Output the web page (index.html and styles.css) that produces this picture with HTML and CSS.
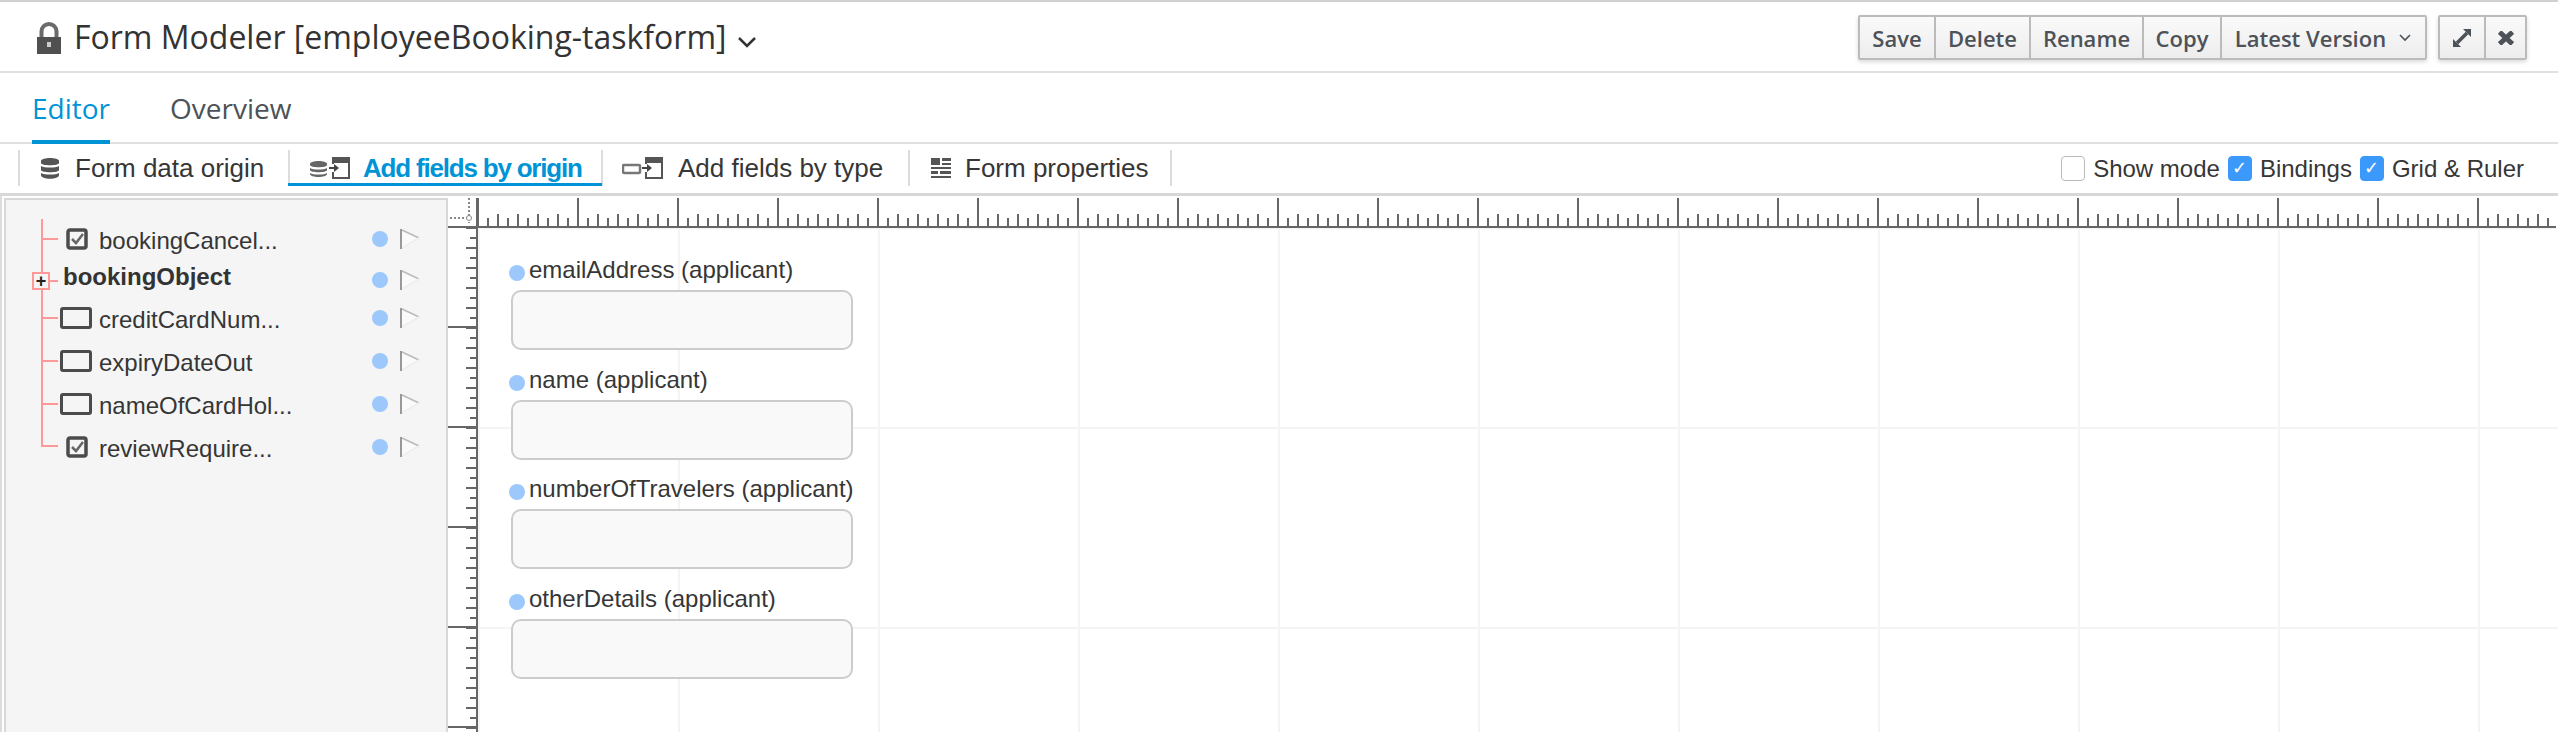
FILE: index.html
```html
<!DOCTYPE html>
<html>

<head>
    <title>Form Modeler</title>
    <link rel="stylesheet" href="styles.css">
</head>

<body>
    <header class="title-bar">
        <svg class="lock" width="26" height="33" viewBox="0 0 26 33">
            <path d="M5.500 17V9.500a7.500 7.500 0 0 1 15 0V17" fill="none" stroke="#6b6b6b" stroke-width="4"/>
            <rect x="1" y="15" width="24" height="17" fill="#505050"/>
            <rect x="11" y="20" width="4" height="5" fill="#ccc"/>
        </svg>
        <h1 class="title">Form Modeler [employeeBooking-taskform]</h1>
        <svg class="title-caret" width="20" height="12" viewBox="0 0 20 12">
            <path d="M2 2l8 8 8-8" fill="none" stroke="#333" stroke-width="2.500"/>
        </svg>
        <div class="title-actions">
            <div class="btn-group">
                <button class="btn btn-save">Save</button>
                <button class="btn btn-delete">Delete</button>
                <button class="btn btn-rename">Rename</button>
                <button class="btn btn-copy">Copy</button>
                <button class="btn btn-version">Latest Version
                    <svg width="14" height="9" viewBox="0 0 14 9">
                        <path d="M2 2l5 5 5-5" fill="none" stroke="#4d5258" stroke-width="1.600"/>
                    </svg>
                </button>
            </div>
            <div class="btn-group">
                <button class="btn btn-expand">
                    <svg width="20" height="20" viewBox="0 0 20 20">
                        <path d="M5 15L15 5" stroke="#4d5258" stroke-width="3.500"/>
                        <path d="M11 1h8v8zM9 19H1v-8z" fill="#4d5258"/>
                    </svg>
                </button>
                <button class="btn btn-close">
                    <svg width="16" height="14" viewBox="0 0 16 14">
                        <path d="M1.500 1l13 12M14.500 1l-13 12" fill="none" stroke="#4d5258" stroke-width="5"/>
                    </svg>
                </button>
            </div>
        </div>
    </header>

    <nav class="tabs">
        <a class="tab tab-active">Editor</a>
        <a class="tab">Overview</a>
    </nav>

    <div class="toolbar">
        <div class="tool tool-origin">
            <svg width="20" height="21" viewBox="0 0 20 21">
                <g fill="#555">
                    <path d="M1 3c0-4 18-4 18 0v2c0 3-18 3-18 0z"/>
                    <path d="M1 8c3 2 15 2 18 0v4c0 3-18 3-18 0z"/>
                    <path d="M1 15c3 2 15 2 18 0v2c0 5-18 5-18 0z"/>
                </g>
            </svg>
            <span>Form data origin</span>
        </div>
        <div class="tool tool-active">
            <svg width="40" height="22" viewBox="0 0 40 22">
                <g fill="#666">
                    <path d="M0 7c0-4 17-4 17 0v1c0 3-17 3-17 0z"/>
                    <path d="M0 11c3 2 14 2 17 0v2c0 3-17 3-17 0z"/>
                    <path d="M0 16c3 2 14 2 17 0v1c0 4-17 4-17 0z"/>
                </g>
                <path d="M23 7V1h16v20H23v-6" fill="none" stroke="#555" stroke-width="2"/>
                <path d="M23 1h16v5H23z" fill="#555"/>
                <path d="M19 10h5V7l5 4-5 4v-3h-5z" fill="#444"/>
            </svg>
            <span>Add fields by origin</span>
        </div>
        <div class="tool tool-type">
            <svg width="41" height="22" viewBox="0 0 41 22">
                <rect x="1" y="8" width="17" height="8" rx="1" fill="none" stroke="#777" stroke-width="2.500"/>
                <path d="M24 7V1h16v20H24v-6" fill="none" stroke="#555" stroke-width="2"/>
                <path d="M24 1h16v5H24z" fill="#555"/>
                <path d="M20 10h5V7l5 4-5 4v-3h-5z" fill="#444"/>
            </svg>
            <span>Add fields by type</span>
        </div>
        <div class="tool tool-props">
            <svg width="20" height="20" viewBox="0 0 20 20">
                <path d="M0 0h9v7H0zM11 0h9v3h-9zM11 5h9v2h-9zM0 9h20v2H0zM0 13h7v3H0zM9 13h11v3H9zM0 18h20v2H0z" fill="#555"/>
            </svg>
            <span>Form properties</span>
        </div>
        <div class="view-options">
            <label class="check"><span class="box"></span>Show mode</label>
            <label class="check"><span class="box box-on">&#10003;</span>Bindings</label>
            <label class="check"><span class="box box-on">&#10003;</span>Grid &amp; Ruler</label>
        </div>
    </div>

    <main class="workspace">
        <aside class="tree">
            <div class="node node-first">
                <span class="branch"></span>
                <svg class="icon-check" width="22" height="22" viewBox="0 0 22 22"><rect x="2" y="2" width="18" height="18" rx="2" fill="none" stroke="#4b4b4b" stroke-width="3.500"/><path d="M6 11l4 4 7-9" fill="none" stroke="#666" stroke-width="2.500"/></svg>
                <span class="node-name">bookingCancel...</span>
                <span class="dot"></span>
                <svg class="flag" width="20" height="20" viewBox="0 0 20 20"><path d="M2 1l17 8L2 19" fill="#fafafa"/><path d="M2 1l17 8" fill="none" stroke="#bbb" stroke-width="1.500"/><path d="M19 9L2 19" fill="none" stroke="#eee" stroke-width="1.500"/><path d="M1 20V0" stroke="#999" stroke-width="2"/></svg>
            </div>
            <div class="node node-parent">
                <span class="branch"></span>
                <span class="plus">+</span>
                <span class="node-name node-bold">bookingObject</span>
                <span class="dot"></span>
                <svg class="flag" width="20" height="20" viewBox="0 0 20 20"><path d="M2 1l17 8L2 19" fill="#fafafa"/><path d="M2 1l17 8" fill="none" stroke="#bbb" stroke-width="1.500"/><path d="M19 9L2 19" fill="none" stroke="#eee" stroke-width="1.500"/><path d="M1 20V0" stroke="#999" stroke-width="2"/></svg>
            </div>
            <div class="node">
                <span class="branch"></span>
                <span class="icon-input"></span>
                <span class="node-name">creditCardNum...</span>
                <span class="dot"></span>
                <svg class="flag" width="20" height="20" viewBox="0 0 20 20"><path d="M2 1l17 8L2 19" fill="#fafafa"/><path d="M2 1l17 8" fill="none" stroke="#bbb" stroke-width="1.500"/><path d="M19 9L2 19" fill="none" stroke="#eee" stroke-width="1.500"/><path d="M1 20V0" stroke="#999" stroke-width="2"/></svg>
            </div>
            <div class="node">
                <span class="branch"></span>
                <span class="icon-input"></span>
                <span class="node-name">expiryDateOut</span>
                <span class="dot"></span>
                <svg class="flag" width="20" height="20" viewBox="0 0 20 20"><path d="M2 1l17 8L2 19" fill="#fafafa"/><path d="M2 1l17 8" fill="none" stroke="#bbb" stroke-width="1.500"/><path d="M19 9L2 19" fill="none" stroke="#eee" stroke-width="1.500"/><path d="M1 20V0" stroke="#999" stroke-width="2"/></svg>
            </div>
            <div class="node">
                <span class="branch"></span>
                <span class="icon-input"></span>
                <span class="node-name">nameOfCardHol...</span>
                <span class="dot"></span>
                <svg class="flag" width="20" height="20" viewBox="0 0 20 20"><path d="M2 1l17 8L2 19" fill="#fafafa"/><path d="M2 1l17 8" fill="none" stroke="#bbb" stroke-width="1.500"/><path d="M19 9L2 19" fill="none" stroke="#eee" stroke-width="1.500"/><path d="M1 20V0" stroke="#999" stroke-width="2"/></svg>
            </div>
            <div class="node node-last">
                <span class="branch"></span>
                <svg class="icon-check" width="22" height="22" viewBox="0 0 22 22"><rect x="2" y="2" width="18" height="18" rx="2" fill="none" stroke="#4b4b4b" stroke-width="3.500"/><path d="M6 11l4 4 7-9" fill="none" stroke="#666" stroke-width="2.500"/></svg>
                <span class="node-name">reviewRequire...</span>
                <span class="dot"></span>
                <svg class="flag" width="20" height="20" viewBox="0 0 20 20"><path d="M2 1l17 8L2 19" fill="#fafafa"/><path d="M2 1l17 8" fill="none" stroke="#bbb" stroke-width="1.500"/><path d="M19 9L2 19" fill="none" stroke="#eee" stroke-width="1.500"/><path d="M1 20V0" stroke="#999" stroke-width="2"/></svg>
            </div>
        </aside>

        <section class="canvas">
            <div class="ruler-corner">
                <svg width="30" height="30" viewBox="0 0 30 30">
                    <path d="M21 0v25M2 20h19" fill="none" stroke="#888" stroke-width="2" stroke-dasharray="2 2"/>
                    <circle cx="21" cy="20" r="2.500" fill="#fff" stroke="#888"/>
                </svg>
            </div>
            <div class="ruler-x"></div>
            <div class="ruler-y"></div>
            <div class="stage">
                <div class="field">
                    <div class="field-label"><span class="dot"></span>emailAddress (applicant)</div>
                    <div class="field-input"></div>
                </div>
                <div class="field">
                    <div class="field-label"><span class="dot"></span>name (applicant)</div>
                    <div class="field-input"></div>
                </div>
                <div class="field">
                    <div class="field-label"><span class="dot"></span>numberOfTravelers (applicant)</div>
                    <div class="field-input"></div>
                </div>
                <div class="field">
                    <div class="field-label"><span class="dot"></span>otherDetails (applicant)</div>
                    <div class="field-input"></div>
                </div>
            </div>
        </section>
    </main>
</body>

</html>
```

FILE: styles.css
```css
html,
body {
    height: 100%;
}

body {
    margin: 0;
    height: 732px;
    overflow: hidden;
    display: flex;
    flex-direction: column;
    background-color: #fff;
    color: #363636;
    font-family: "Open Sans", sans-serif;
    border-top: 2px solid #d1d1d1;
    box-sizing: border-box;
}

/* title bar */
.title-bar {
    height: 69px;
    flex: none;
    display: flex;
    align-items: center;
    padding: 0 31px 0 36px;
    border-bottom: 2px solid #e0e0e0;
}

.lock {
    margin: 4px 12px 0 0;
    flex: none;
}

.title {
    margin: 0;
    font-size: 32px;
    font-weight: 400;
    color: #333;
}

.title-caret {
    margin: 11px 0 0 10px;
}

.title-actions {
    margin-left: auto;
    display: flex;
    gap: 11px;
    margin-top: 2px;
}

.btn-group {
    display: flex;
    border: 2px solid #bbb;
    border-radius: 2px;
    box-shadow: 0 2px 4px rgba(0, 0, 0, 0.15);
}

.btn {
    height: 41px;
    padding: 0;
    border: none;
    border-left: 2px solid #bbb;
    background: linear-gradient(#fafafa, #ededed);
    color: #4d5258;
    font-family: "Open Sans", sans-serif;
    font-size: 22px;
    font-weight: 600;
    display: flex;
    align-items: center;
    justify-content: center;
    gap: 12px;
}

.btn:first-child {
    border-left: none;
}

.btn-save { width: 74px; }
.btn-delete { width: 95px; }
.btn-rename { width: 113px; }
.btn-copy { width: 78px; }
.btn-version { width: 205px; }
.btn-expand { width: 44px; }
.btn-close { width: 41px; }

/* tabs */
.tabs {
    height: 69px;
    flex: none;
    display: flex;
    gap: 60px;
    padding-left: 32px;
    border-bottom: 2px solid #e0e0e0;
}

.tab {
    height: 69px;
    box-sizing: border-box;
    padding-top: 14px;
    font-size: 28px;
    line-height: 42px;
    color: #4d5258;
}

.tab-active {
    color: #0093d6;
    border-bottom: 4px solid #0093d6;
    height: 71px;
}

/* toolbar */
.toolbar {
    height: 49px;
    flex: none;
    display: flex;
    align-items: flex-start;
    padding-left: 18px;
    border-bottom: 3px solid #d8d8d8;
    font-family: "Liberation Sans", Arial, sans-serif;
    font-size: 26px;
}

.tool {
    display: flex;
    align-items: center;
    box-sizing: border-box;
    border-left: 2px solid #ddd;
    height: 36px;
    margin-top: 6px;
    color: #363636;
}

.tool span {
    white-space: nowrap;
}

.tool-origin {
    width: 270px;
    padding-left: 20px;
    gap: 15px;
}

.tool-active {
    width: 313px;
    height: 36px;
    padding-left: 20px;
    gap: 13px;
    color: #0093d6;
    font-weight: 700;
    letter-spacing: -1.2px;
    position: relative;
}

.tool-active::after {
    content: "";
    position: absolute;
    left: -2px;
    right: -1px;
    top: 33px;
    height: 3px;
    background-color: #0093d6;
}

.tool-type {
    width: 307px;
    padding-left: 19px;
    gap: 15px;
}

.tool-props {
    width: 264px;
    padding-left: 21px;
    gap: 14px;
    border-right: 2px solid #ddd;
}

.view-options {
    margin-left: auto;
    align-self: center;
    display: flex;
    align-items: center;
    gap: 8px;
    padding-right: 34px;
    font-size: 24px;
}

.check {
    display: flex;
    align-items: center;
    gap: 8px;
}

.box {
    width: 22px;
    height: 23px;
    border: 1px solid #bbb;
    border-radius: 4px;
    background-color: #fff;
    color: #fff;
    font-size: 18px;
    line-height: 23px;
    text-align: center;
}

.box-on {
    background-color: #3b99fc;
    border-color: #3b99fc;
}

/* tree and canvas */
.workspace {
    flex: 1;
    min-height: 0;
    display: flex;
    padding: 2px 0 0 2px;
    border-left: 2px solid #ddd;
    font-family: "Liberation Sans", Arial, sans-serif;
    font-size: 24px;
    color: #363636;
}

.tree {
    width: 444px;
    flex: none;
    box-sizing: border-box;
    padding: 19px 0 0 35px;
    background-color: #f5f5f5;
    border: 2px solid #d8d8d8;
    border-bottom: none;
}

.node {
    position: relative;
    height: 43px;
    display: flex;
    align-items: center;
}

.node-first {
    height: 39px;
}

.node-parent {
    height: 38px;
    padding-top: 6px;
    box-sizing: border-box;
}

.branch {
    position: absolute;
    left: 0;
    top: 0;
    bottom: 0;
    width: 17px;
    border-left: 2px solid #f99;
    box-sizing: border-box;
}

.branch::after {
    content: "";
    position: absolute;
    left: 0;
    right: 0;
    top: calc(50% - 1px);
    border-top: 2px solid #f99;
}

.node-parent .branch::after {
    top: calc(50% + 3px);
}

.node-last .branch {
    bottom: 50%;
}

.node-last .branch::after {
    top: auto;
    bottom: 0;
}

.plus {
    position: absolute;
    left: -9px;
    top: 14px;
    width: 14px;
    height: 14px;
    border: 2px solid #f99;
    background-color: #f5f5f5;
    color: #222;
    font: 700 18px/14px "Liberation Sans", Arial, sans-serif;
    text-align: center;
}

.icon-check {
    margin-left: 25px;
    margin-right: 11px;
    flex: none;
}

.icon-input {
    width: 26px;
    height: 16px;
    margin-left: 19px;
    margin-right: 7px;
    border: 3px solid #4b4b4b;
    border-radius: 3px;
    flex: none;
}

.node-name {
    padding-top: 5px;
    white-space: nowrap;
}

.node-bold {
    font-weight: 700;
    margin-left: 22px;
    padding-top: 0;
    color: #333;
    margin-top: -6px;
}

.dot {
    width: 16px;
    height: 16px;
    border-radius: 50%;
    background-color: #9cc8fb;
    flex: none;
}

.node .dot {
    position: absolute;
    left: 331px;
}

.flag {
    position: absolute;
    left: 359px;
}

.canvas {
    flex: 1;
    display: grid;
    grid-template-columns: 30px 1fr;
    grid-template-rows: 30px 1fr;
    min-width: 0;
}

.ruler-corner {
    border-bottom: 2px solid #666;
    border-right: 2px solid #666;
    box-sizing: border-box;
    overflow: hidden;
}

.ruler-x {
    margin-right: 2px;
    border-bottom: 2px solid #666;
    box-sizing: border-box;
    background-image:
        linear-gradient(to right, #666 2px, transparent 2px),
        linear-gradient(to right, #666 2px, transparent 2px),
        linear-gradient(to right, #666 2px, transparent 2px);
    background-size: 100px 100%, 20px 12px, 20px 8px;
    background-position: -1px 0, 19px 100%, 9px 100%;
    background-repeat: repeat-x;
}

.ruler-y {
    border-right: 2px solid #666;
    box-sizing: border-box;
    background-image:
        linear-gradient(#666 2px, transparent 2px),
        linear-gradient(#666 2px, transparent 2px),
        linear-gradient(#666 2px, transparent 2px);
    background-size: 100% 100px, 10px 20px, 6px 20px;
    background-position: 0 98px, 100% 19px, 100% 9px;
    background-repeat: repeat-y;
}

.stage {
    padding: 26px 0 0 31px;
    background-image:
        linear-gradient(to right, #f4f4f4 2px, transparent 2px),
        linear-gradient(#f4f4f4 2px, transparent 2px);
    background-size: 200px 200px;
    background-position: 200px 0, 0 199px;
}

.field {
    height: 109.7px;
}

.field-label {
    height: 32px;
    margin-bottom: 4px;
    display: flex;
    align-items: center;
    gap: 4px;
    white-space: nowrap;
}

.field-label .dot {
    margin-top: 6px;
}

.field-input {
    width: 338px;
    height: 56px;
    margin-left: 2px;
    border: 2px solid #ccc;
    border-radius: 10px;
    background-color: #f9f9f9;
}
```
